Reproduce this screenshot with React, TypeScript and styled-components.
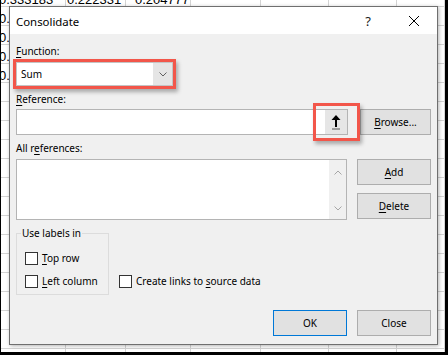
import React from "react";
import styled, { createGlobalStyle } from "styled-components";

const Global = createGlobalStyle`
  html, body { margin: 0; padding: 0; background: #fff; }
  body { width: 448px; height: 355px; overflow: hidden; }
`;

const Frame = styled.div`
  position: relative;
  width: 448px;
  height: 355px;
  box-sizing: border-box;
  border-left: 1px solid #000;
  border-right: 3px solid #000;
  border-bottom: 3px solid #000;
  overflow: hidden;
  background: #fff;
`;

const Sheet = styled.div`
  display: grid;
  grid-template-columns: 65px 60px 65px 70px 68px 68px 1fr;
  grid-auto-rows: 19px;
  margin-top: -12px;
  font-family: "Liberation Sans", Arial, sans-serif;
  font-size: 13px;
  color: #000;
`;

const Cell = styled.div<{ $indent: number }>`
  box-sizing: border-box;
  border-right: 1px solid #d4d4d4;
  border-bottom: 1px solid #d4d4d4;
  display: flex;
  align-items: flex-end;
  padding-left: ${(p) => Math.max(p.$indent, 0)}px;
  text-indent: ${(p) => Math.min(p.$indent, 0)}px;
  line-height: 13px;
  white-space: nowrap;
  overflow: hidden;
`;

const Dialog = styled.div`
  position: absolute;
  left: 8px;
  top: 6px;
  width: 429px;
  box-sizing: border-box;
  border: 1px solid #6f6f6f;
  background: #f0f0f0;
  box-shadow: 1px 1px 4px rgba(0, 0, 0, 0.3);
  font-family: "Noto Sans", "Open Sans", sans-serif;
  color: #000;
`;

const TitleBar = styled.div`
  display: flex;
  align-items: center;
  height: 27px;
  background: #fff;
`;

const Title = styled.div`
  flex: 1;
  padding: 3px 0 0 6px;
  font-size: 11.4px;
  line-height: 16px;
`;

const TitleButton = styled.div`
  width: 46px;
  height: 27px;
  display: flex;
  align-items: center;
  justify-content: center;
  font-size: 13px;
  color: #1a1a1a;
`;

const Body = styled.div`
  display: flex;
  flex-direction: column;
  padding: 10px 6px 8px 6px;
  font-size: 10px;
`;

const FieldLabel = styled.div<{ $top: number; $bottom: number }>`
  line-height: 14px;
  margin-top: ${(p) => p.$top}px;
  margin-bottom: ${(p) => p.$bottom}px;
  white-space: nowrap;
`;

const Key = styled.span`
  text-decoration: underline;
  text-underline-offset: 1.5px;
  text-decoration-thickness: 1px;
`;

const Select = styled.div`
  display: flex;
  width: 157px;
  height: 24px;
  box-sizing: border-box;
  border: 1px solid #c4c4c4;
  background: #fff;
  box-shadow: 0 0 0 3px #f2564a, 2px 3px 4px 3px rgba(0, 0, 0, 0.3);
`;

const SelectValue = styled.div`
  flex: 1;
  padding-left: 4px;
  line-height: 22px;
`;

const SelectArrow = styled.div`
  width: 19px;
  background: #e5e5e5;
  display: flex;
  align-items: center;
  justify-content: center;
`;

const Row = styled.div<{ $gap: number }>`
  display: flex;
  align-items: flex-start;
  gap: ${(p) => p.$gap}px;
`;

const TextBox = styled.div`
  flex: 1;
  height: 26px;
  box-sizing: border-box;
  border: 1px solid #b4b4b4;
  background: #fff;
  display: flex;
  justify-content: flex-end;
`;

const CollapseButton = styled.div`
  position: relative;
  width: 22px;
  background: #e6e6e6;
  display: flex;
  align-items: center;
  justify-content: center;
  &::after {
    content: "";
    position: absolute;
    inset: -7px -13px -7px -12px;
    border: 3px solid #f2564a;
    box-shadow: 2px 3px 4px rgba(0, 0, 0, 0.3);
  }
`;

const ListBox = styled.div`
  width: 331px;
  height: 61px;
  box-sizing: border-box;
  border: 1px solid #b4b4b4;
  background: #fff;
  display: flex;
  justify-content: flex-end;
`;

const ScrollTrack = styled.div`
  width: 17px;
  box-sizing: border-box;
  background: #f0f0f0;
  padding: 10px 0 8px;
  display: flex;
  flex-direction: column;
  align-items: center;
  justify-content: space-between;
`;

const ButtonColumn = styled.div`
  display: flex;
  flex-direction: column;
  gap: 8px;
`;

const PushButton = styled.div<{ $width: number; $primary?: boolean }>`
  width: ${(p) => p.$width}px;
  height: 26px;
  box-sizing: border-box;
  border: 1px solid ${(p) => (p.$primary ? "#0078d7" : "#adadad")};
  background: #e1e1e1;
  display: flex;
  align-items: center;
  justify-content: center;
  line-height: 14px;
`;

const OptionsRow = styled.div`
  display: flex;
  align-items: flex-end;
  margin-top: 6px;
`;

const GroupBox = styled.fieldset`
  margin: 0;
  width: 93px;
  box-sizing: border-box;
  border: 1px solid #dcdcdc;
  padding: 11px 0 6px 8px;
  display: flex;
  flex-direction: column;
  gap: 9px;
`;

const Legend = styled.legend`
  padding: 0 1px;
  margin-left: -4px;
  line-height: 14px;
  font-size: 10px;
`;

const CheckItem = styled.div<{ $offset?: number }>`
  display: flex;
  align-items: center;
  gap: 4px;
  line-height: 14px;
  white-space: nowrap;
  margin-left: ${(p) => p.$offset ?? 0}px;
  margin-bottom: ${(p) => (p.$offset ? 7 : 0)}px;
`;

const CheckBox = styled.span`
  width: 13px;
  height: 13px;
  box-sizing: border-box;
  border: 1px solid #333;
  background: #fff;
  flex: none;
`;

const Footer = styled.div`
  display: flex;
  justify-content: flex-end;
  gap: 10px;
  margin-top: 15px;
`;

const Chevron = ({ up, color }: { up?: boolean; color: string }) => (
  <svg width="8" height="5" viewBox="0 0 8 5">
    <path
      d={up ? "M0.5 4.5 L4 1 L7.5 4.5" : "M0.5 0.5 L4 4 L7.5 0.5"}
      fill="none"
      stroke={color}
      strokeWidth="1"
    />
  </svg>
);

const UpArrow = () => (
  <svg width="10" height="15" viewBox="0 0 10 15">
    <path d="M5 0 L9.5 5 H0.5 Z" fill="#000" />
    <rect x="4" y="4" width="2" height="8" fill="#000" />
    <rect x="1" y="13.5" width="8" height="1" fill="#555" />
  </svg>
);

const CloseGlyph = () => (
  <svg width="10" height="10" viewBox="0 0 10 10">
    <path d="M0 0 L10 10 M10 0 L0 10" stroke="#000" strokeWidth="1" />
  </svg>
);

const indents = [-2, 1, 9, 2, 2, 2, 2];
const sheetData: string[][] = [
  ["0.333183", "0.222331", "0.204777"],
  ["0.416473", "0.581227", "0.713948"],
  ["0.296311", "0.184502", "0.658091"],
  ["0.507764", "0.390215", "0.127436"],
  ["0.842150", "0.269983", "0.475302"],
];
const ROWS = 20;

export default function App() {
  return (
    <>
      <Global />
      <Frame>
        <Sheet>
          {Array.from({ length: ROWS }).map((_, r) =>
            indents.map((ind, c) => (
              <Cell key={`${r}-${c}`} $indent={ind}>
                {sheetData[r]?.[c] ?? ""}
              </Cell>
            ))
          )}
        </Sheet>

        <Dialog>
          <TitleBar>
            <Title>Consolidate</Title>
            <TitleButton>?</TitleButton>
            <TitleButton>
              <CloseGlyph />
            </TitleButton>
          </TitleBar>
          <Body>
            <FieldLabel $top={0} $bottom={4}>
              <Key>F</Key>unction:
            </FieldLabel>
            <Select>
              <SelectValue>Sum</SelectValue>
              <SelectArrow>
                <Chevron color="#606060" />
              </SelectArrow>
            </Select>

            <FieldLabel $top={6} $bottom={3}>
              <Key>R</Key>eference:
            </FieldLabel>
            <Row $gap={12}>
              <TextBox>
                <CollapseButton>
                  <UpArrow />
                </CollapseButton>
              </TextBox>
              <PushButton $width={71}>
                <span>
                  <Key>B</Key>rowse...
                </span>
              </PushButton>
            </Row>

            <FieldLabel $top={6} $bottom={4}>
              All r<Key>e</Key>ferences:
            </FieldLabel>
            <Row $gap={10}>
              <ListBox>
                <ScrollTrack>
                  <Chevron up color="#a6a6a6" />
                  <Chevron color="#a6a6a6" />
                </ScrollTrack>
              </ListBox>
              <ButtonColumn>
                <PushButton $width={74}>
                  <span>
                    <Key>A</Key>dd
                  </span>
                </PushButton>
                <PushButton $width={74}>
                  <span>
                    <Key>D</Key>elete
                  </span>
                </PushButton>
              </ButtonColumn>
            </Row>

            <OptionsRow>
              <GroupBox>
                <Legend>Use labels in</Legend>
                <CheckItem>
                  <CheckBox />
                  <span>
                    <Key>T</Key>op row
                  </span>
                </CheckItem>
                <CheckItem>
                  <CheckBox />
                  <span>
                    <Key>L</Key>eft column
                  </span>
                </CheckItem>
              </GroupBox>
              <CheckItem $offset={10}>
                <CheckBox />
                <span>
                  Create links to <Key>s</Key>ource data
                </span>
              </CheckItem>
            </OptionsRow>

            <Footer>
              <PushButton $width={74} $primary>
                OK
              </PushButton>
              <PushButton $width={74}>Close</PushButton>
            </Footer>
          </Body>
        </Dialog>
      </Frame>
    </>
  );
}
